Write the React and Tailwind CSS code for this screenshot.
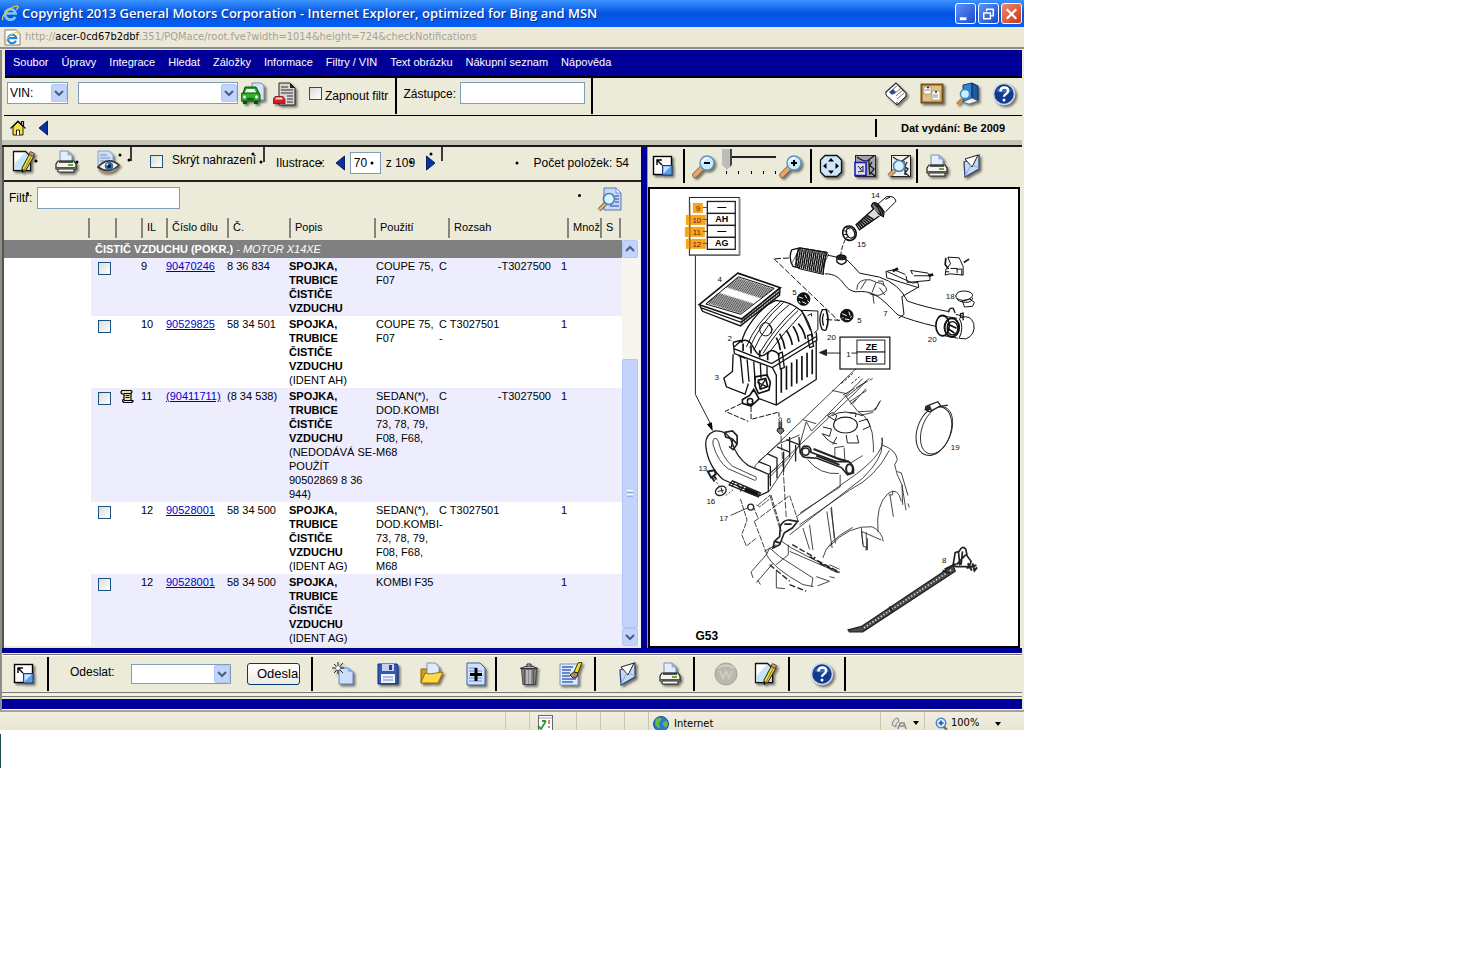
import React from "react";

const sans = "font-['Liberation_Sans',Arial,sans-serif]";
const tahoma = "font-['DejaVu_Sans_Condensed','DejaVu_Sans',sans-serif]";
const shadow = "drop-shadow-[2px_2px_1px_rgba(0,0,0,0.5)]";

/* ---------- icons ---------- */

function Icon({ children, flat }) {
  return (
    <svg viewBox="0 0 24 24" className={flat ? "block size-6" : "block size-6 " + shadow} aria-hidden="true">
      {children}
    </svg>
  );
}

function IconButton({ label, children, flat }) {
  return (
    <button type="button" aria-label={label} className="size-6 shrink-0">
      <Icon flat={flat}>{children}</Icon>
    </button>
  );
}

const NotePencil = (
  <>
    <path d="M1.5 1.5h12l5 5v14h-17z" fill="#fff" stroke="#111" strokeWidth="1.3" />
    <path d="M2.500 14L13 2.500l5 4V20H2.500z" fill="#b9dcf8" opacity=".8" />
    <path d="M17.500 4l4.500 2-8 14-4 2.500v-4.500z" fill="#e8d838" stroke="#222" />
    <path d="M20 5L12 20" stroke="#8f8212" />
    <path d="M18.500 1.500l4 2-1 3-4.500-2z" fill="#d98a86" stroke="#222" strokeWidth=".7" />
    <path d="M10 19l2 1-2 3z" fill="#111" />
  </>
);
const Printer = (
  <>
    <path d="M6 11V1h8l4 4v6z" fill="#e4edfb" stroke="#7d93bd" />
    <path d="M14 1v4h4z" fill="#a9bfe6" stroke="#7d93bd" strokeWidth=".7" />
    <path d="M4 11h16l2 3v5H2v-5z" fill="#f4f4ec" stroke="#222" strokeWidth="1.2" />
    <path d="M5 12h14" stroke="#222" strokeWidth="1.500" />
    <path d="M2 17.500h20" stroke="#555" />
    <path d="M14 15h5" stroke="#58b431" strokeWidth="2" />
    <path d="M4 19h16v3H4z" fill="#fbfbf5" stroke="#222" />
  </>
);
const Eye = (
  <>
    <path d="M2 1h11l4 4v14H2z" fill="#cfdff8" stroke="#8aa2d0" />
    <path d="M4 5h7M4 8h10M4 11h10" stroke="#6c8dce" />
    <path d="M2 17Q12 6 23 15Q13 25 2 17z" fill="#f3f3f3" stroke="#3d3328" strokeWidth="1.6" />
    <path d="M3 20q9 5 17-1" fill="none" stroke="#b98d6c" strokeWidth="1.500" />
    <circle cx="13" cy="16" r="4.3" fill="#2b6fb4" />
    <circle cx="13" cy="16" r="2" fill="#071a33" />
    <circle cx="11.5" cy="14.5" r="1" fill="#fff" />
  </>
);
const DocSearch = (
  <>
    <path d="M6 1h12l5 5v17H6z" fill="#c6d8f7" stroke="#5875b4" />
    <path d="M18 1v5h5z" fill="#f2f6ff" stroke="#5875b4" strokeWidth=".7" />
    <path d="M17 9h4M17 12h4M17 15h4M12 19h9" stroke="#5577c0" strokeWidth="1.4" />
    <path d="M8 16l-7 7" stroke="#7b5b32" strokeWidth="4" />
    <path d="M8 16l-7 7" stroke="#e3b47e" strokeWidth="2.4" />
    <circle cx="11" cy="12" r="5.500" fill="#d8f4ff" stroke="#4c7fb5" strokeWidth="1.6" />
  </>
);
const Expand = (
  <>
    <rect x="2.5" y="2.5" width="18" height="18" fill="#fff" stroke="#000" strokeWidth="1.4" />
    <path d="M6 11V6h5M6 6l5 5" fill="none" stroke="#000" strokeWidth="1.4" />
    <rect x="11.500" y="11.500" width="9.500" height="9.500" fill="#5f9fe8" stroke="#1d3d7c" />
    <path d="M12.500 12.500h7l-7 7z" fill="#c8e2ff" />
  </>
);
const lens = (
  <>
    <path d="M10 14l-7 7" stroke="#8d5f36" strokeWidth="5.500" strokeLinecap="round" />
    <path d="M10 14l-7 7" stroke="#dfa873" strokeWidth="4" strokeLinecap="round" />
    <circle cx="15" cy="9" r="7" fill="#c8ecff" stroke="#5d93c4" strokeWidth="1.4" />
    <path d="M10 8q2-4 6-4" fill="none" stroke="#fff" strokeWidth="1.5" />
  </>
);
const ZoomOut = <>{lens}<path d="M12 9h6" stroke="#000" strokeWidth="2" /></>;
const ZoomIn = <>{lens}<path d="M12 9h6M15 6v6" stroke="#000" strokeWidth="2" /></>;
const Pan = (
  <>
    <path d="M6 1.500h12l4.500 4.500v12L18 22.500H6L1.500 18V6z" fill="#cfe6fb" stroke="#111" strokeWidth="1.3" />
    <path d="M12 4l3 3.500H9zM12 20l3-3.500H9zM4 12l3.500-3v6zM20 12l-3.500-3v6z" fill="#000" />
  </>
);
const FitArea = (
  <>
    <rect x="2.500" y="1.500" width="20" height="21" fill="#a3a3ad" stroke="#222" />
    <path d="M4 3q5 4 10 4l7-5M16 6v5l5 4-3 4 4 3M19 8l-3 5 1 8" fill="none" stroke="#111" strokeWidth="1.2" />
    <rect x="2" y="8.500" width="11" height="13" fill="#d8dcf4" stroke="#1414b8" strokeWidth="1.5" />
    <path d="M5 12l5 6V12l-3 3M5 18l4-1" fill="none" stroke="#222" />
  </>
);
const ZoomArea = (
  <>
    <rect x="4.500" y="1.500" width="19" height="21" fill="#f0f0f0" stroke="#222" />
    <path d="M6 3q5 4 9 4l7-5M17 7v5l4 3-3 4 4 3M20 8l-2 4M18 14v7" fill="none" stroke="#222" strokeWidth="1.3" />
    <path d="M8 16l-6 6" stroke="#6e4c26" strokeWidth="4.500" />
    <path d="M8 16l-6 6" stroke="#dfa873" strokeWidth="3" />
    <circle cx="12" cy="12" r="5.500" fill="#d6f0ff" stroke="#4a7fb0" strokeWidth="1.500" />
  </>
);
const Envelope = (
  <>
    <path d="M4 8L19 1v14L5 23z" fill="#c4d9f6" stroke="#33456f" strokeWidth="1.300" />
    <path d="M5 5L18 1l-6 12z" fill="#fff" stroke="#222" />
    <path d="M5 22l6-11M19 14l-6-3" fill="none" stroke="#8ba5d4" />
  </>
);
const NewDoc = (
  <>
    <path d="M7 6h9l5 4v12H7z" fill="#c9defa" stroke="#6684bf" />
    <path d="M16 6v4h5z" fill="#8fb0e6" />
    <path d="M6 0v12M0 6h12M2 2l9 9M11 1L2 11" stroke="#222" />
    <circle cx="6" cy="6" r="2" fill="#fff" />
  </>
);
const Floppy = (
  <>
    <path d="M2 2h19l1 2v18H2z" fill="#3358bd" stroke="#142a70" />
    <rect x="6" y="2" width="12" height="7" fill="#c5d2f3" />
    <rect x="13" y="3" width="3" height="5" fill="#24408f" />
    <rect x="5" y="12" width="14" height="9" fill="#eef2fb" />
    <path d="M7 15h10M7 18h10" stroke="#6d88cc" />
  </>
);
const Folder = (
  <>
    <path d="M1 7h6l1 2v12H1z" fill="#d59d17" stroke="#8a6209" />
    <path d="M7 1h8l4 4v10H7z" fill="#dfeafb" stroke="#7d93bd" />
    <path d="M5 11l5 1 13-2-5 11H1z" fill="#ffd94a" stroke="#9b6c05" />
  </>
);
const DocPlus = (
  <>
    <path d="M3 1h13l5 5v17H3z" fill="#cfe0fa" stroke="#3e5ea6" />
    <path d="M5 6h8M5 9h13M5 16h13M5 19h13" stroke="#6f8fd0" />
    <path d="M12 6v13M6 12.500h12" stroke="#000" strokeWidth="3" />
  </>
);
const Trash = (
  <>
    <path d="M4.500 7h15l-1 15.500H6z" fill="#8d8d8d" stroke="#444" />
    <path d="M7.500 8v14M16.500 8v14" stroke="#555" strokeWidth="1.500" />
    <path d="M10 8v14M13 8v14" stroke="#c4c4c4" strokeWidth="1.500" />
    <path d="M3 6.500q9-5 18 0z" fill="#b5b5b5" stroke="#333" />
    <path d="M10 4V2h4v2" fill="none" stroke="#222" />
  </>
);
const DocBrush = (
  <>
    <path d="M1 2h18v21H1z" fill="#dfeafc" stroke="#7f97cb" />
    <path d="M3 5h11M3 8h9M3 11h8M3 14h8M3 17h14M3 20h11" stroke="#3f66b5" strokeWidth="1.300" />
    <path d="M15 10L19 1l4-1-4 11z" fill="#f0dc28" stroke="#3c3610" />
    <path d="M11 13l4-3 4 1-1 4-4 1z" fill="#b28a6a" stroke="#33261a" />
  </>
);
const Globe = (
  <>
    <circle cx="12" cy="12" r="11" fill="#b9b9b0" stroke="#a2a298" />
    <path d="M6 9l3 7 3-7 3 7 3-7" fill="none" stroke="#d0d0c6" strokeWidth="1.600" />
    <path d="M4 6q8-5 16 0" fill="none" stroke="#cfcfc6" strokeWidth="2" />
  </>
);
const Help = (
  <>
    <circle cx="12" cy="12" r="10.500" fill="#103a8e" stroke="#c9d5ea" strokeWidth="1.600" />
    <path d="M4 9q8-9 16 0-8 3-16 0z" fill="#5b8bd8" opacity=".6" />
    <path d="M8.500 9.500q0-4 4-4t3.500 3.500q0 2-2 3t-2 2.800" fill="none" stroke="#fff" strokeWidth="2.500" />
    <circle cx="12" cy="18" r="1.500" fill="#fff" />
  </>
);
const Car = (
  <>
    <path d="M11 1h9l3 3v14H11z" fill="#d5e3f7" stroke="#7c8fae" />
    <path d="M4 5h11l3 6v3H2v-3z" fill="#2a9a2a" stroke="#0c4d0c" />
    <path d="M5.500 7h8l2 4h-12z" fill="#e8ffe8" />
    <path d="M1 11h17l1 2v6H0v-6z" fill="#36ad30" stroke="#0c4d0c" />
    <path d="M2 19v3h4v-3zM13 19v3h4v-3z" fill="#134d13" />
    <circle cx="3.500" cy="15" r="1.400" fill="#fff" />
    <circle cx="15.500" cy="15" r="1.400" fill="#fff" />
    <path d="M6 17h7" stroke="#0c4d0c" strokeWidth="1.500" />
  </>
);
const CarDoc = (
  <>
    <path d="M6 1h11l5 5v17H6z" fill="#d4d4d4" stroke="#222" />
    <path d="M17 1v5h5z" fill="#222" />
    <path d="M8 5h7M8 8h12M8 11h12M14 14h6M14 17h6M14 20h6" stroke="#333" />
    <path d="M2 14.500h8l2 3v4H0v-4z" fill="#d41c24" stroke="#7d090d" strokeWidth=".7" />
    <path d="M3 15.500h6l1 2H2z" fill="#ffd7d7" />
  </>
);
const News = (
  <>
    <path d="M2 10L12 1l10 10-9 9z" fill="#fff" stroke="#222" strokeWidth="1.100" />
    <path d="M2 10v3l11 10 9-9v-3M13 20v3" fill="#fff" stroke="#222" />
    <path d="M8 8l5-4M10 12l7-6M12 14l7-6M13 17l7-6" stroke="#777" />
    <path d="M5 10l4-3 3 3-4 3z" fill="#24508f" />
  </>
);
const Board = (
  <>
    <rect x="1.500" y="2.500" width="21" height="18" fill="#dfc08a" stroke="#7a5319" strokeWidth="2" />
    <path d="M4 5h7v7H4z" fill="#fff" stroke="#8a7a5a" strokeWidth=".6" />
    <path d="M12 9h8v9h-8z" fill="#fff" stroke="#8a7a5a" strokeWidth=".6" />
    <path d="M5 8h5M13 13h5M13 15h5" stroke="#666" strokeWidth=".8" />
    <circle cx="8" cy="5.500" r="1" fill="#222" />
    <circle cx="16" cy="10" r="1" fill="#222" />
  </>
);
const BookSearch = (
  <>
    <path d="M7 3l9-2v15l-9 4z" fill="#2c86d3" stroke="#0f3f78" />
    <path d="M16 1l6 3v15l-6-3z" fill="#1a5ba4" stroke="#0c2f5e" />
    <path d="M7 20l9-4 6 3-9 3z" fill="#f1f1f1" stroke="#456" strokeWidth=".6" />
    <path d="M6 17l-5 5" stroke="#d0813c" strokeWidth="3" />
    <circle cx="9" cy="12" r="4.600" fill="#cdefff" stroke="#4287bf" strokeWidth="1.500" />
  </>
);

function ExplorerLogo({ page }) {
  return (
    <svg viewBox="0 0 18 18" className="size-[17px] shrink-0" aria-hidden="true">
      {page && <path d="M1 1h12l4 4v12H1z" fill="#fff" stroke="#777" />}
      <g transform={page ? "translate(1.500 2.500) scale(.8)" : ""}>
        <path d="M14 12.500A5.600 5.600 0 1 1 14.500 9H5" fill="none" stroke={page ? "#2a86d8" : "#7cc9ff"} strokeWidth="2.800" />
        <path d="M1 16Q-1 12 6 6T17 1.500Q17 4 15 5" fill="none" stroke="#f0c53a" strokeWidth="1.400" />
      </g>
    </svg>
  );
}

function Triangle({ dir }) {
  return (
    <svg viewBox="0 0 10 16" className="block h-4 w-[10px]" aria-hidden="true">
      <path d={dir === "left" ? "M9.500 1v14L1 8z" : "M.5 1v14L9 8z"} fill="#0c2f9c" stroke="#071f66" />
    </svg>
  );
}

function Chevron({ up }) {
  return (
    <svg viewBox="0 0 16 18" className="block h-[18px] w-4" aria-hidden="true">
      <rect x=".5" y=".5" width="15" height="17" rx="1.500" fill="#c2d4fc" stroke="#b0c6f4" />
      <path d={up ? "M4 11l4-4 4 4" : "M4 7l4 4 4-4"} fill="none" stroke="#4d6185" strokeWidth="2.200" />
    </svg>
  );
}

/* ---------- controls ---------- */

function Dropdown({ label, id, value, className }) {
  return (
    <div className={"relative shrink-0 " + className}>
      <select
        id={id}
        aria-label={label}
        className="block h-full w-full appearance-none border border-[#7f9db9] bg-white pl-[2px] text-[12px] text-black"
      >
        <option>{value}</option>
      </select>
      <span className="pointer-events-none absolute inset-y-0 right-px flex items-center">
        <Chevron />
      </span>
    </div>
  );
}

function Check({ id, label }) {
  return (
    <input
      id={id}
      type="checkbox"
      aria-label={label}
      className="block size-[13px] shrink-0 appearance-none border border-[#1c5180] bg-linear-to-br from-[#dcdcd7] to-white"
    />
  );
}

const textBox = "h-[22px] shrink-0 border border-[#7f9db9] bg-white px-[3px] text-[12px]";

/* ---------- part list ---------- */

const parts = [
  { il: "9", no: "90470246", cat: "8 36 834", note: [], use: ["COUPE 75,", "F07"], c: "C", to: "-T3027500" },
  { il: "10", no: "90529825", cat: "58 34 501", note: ["(IDENT AH)"], use: ["COUPE 75,", "F07"], c: "C T3027501", dash: true },
  {
    il: "11", no: "(90411711)", cat: "(8 34 538)", scroll: true,
    note: ["(NEDODÁVÁ SE-", "POUŽÍT", "90502869 8 36", "944)"],
    use: ["SEDAN(*),", "DOD.KOMBI", "73, 78, 79,", "F08, F68,", "M68"], c: "C", to: "-T3027500",
  },
  { il: "12", no: "90528001", cat: "58 34 500", note: ["(IDENT AG)"], use: ["SEDAN(*),", "DOD.KOMBI", "73, 78, 79,", "F08, F68,", "M68"], c: "C T3027501", dash: true },
  { il: "12", no: "90528001", cat: "58 34 500", note: ["(IDENT AG)"], use: ["KOMBI F35"] },
];

function Lines({ items }) {
  return items.map((t) => <div key={t}>{t}</div>);
}

function ScrollNote() {
  return (
    <svg viewBox="0 0 14 15" className="block h-[15px] w-[14px]" aria-hidden="true">
      <path d="M2 1.500h9q2 1 0 3v7h2q0 2-2 2H4q-2-1-1-3h1V5H2Q0 3 2 1.500z" fill="#efe3b4" stroke="#000" strokeWidth="1.200" />
      <path d="M4 4.500h7M5.500 6.500h4M5.500 8.500h4M4 11.500h7" stroke="#000" />
    </svg>
  );
}

function Th({ children, className }) {
  return (
    <th className="p-0 text-left align-top font-normal">
      <div className={"mt-px h-[20px] border-l-2 border-[#85857d] pl-1 leading-[18px] whitespace-nowrap " + className}>{children}</div>
    </th>
  );
}

function PartTable() {
  return (
    <table className="w-full table-fixed border-collapse text-[11px] leading-[14px]">
      <colgroup>
        <col className="w-[87px]" />
        <col className="w-[24px]" />
        <col className="w-[26px]" />
        <col className="w-[25px]" />
        <col className="w-[61px]" />
        <col className="w-[62px]" />
        <col />
        <col className="w-[63px]" />
        <col className="w-[122px]" />
        <col className="w-[39px]" />
        <col className="w-[22px]" />
      </colgroup>
      <thead>
        <tr className="h-[23px] bg-[#ecebd9]">
          <td className="p-0" />
          <Th className="-ml-[3px]" />
          <Th />
          <Th>IL</Th>
          <Th>Číslo dílu</Th>
          <Th>Č.</Th>
          <Th>Popis</Th>
          <Th className="-ml-[2px]">Použití</Th>
          <Th className="ml-[9px]">Rozsah</Th>
          <Th className="ml-[6px]">Množ</Th>
          <Th className="mr-px border-r-2">S</Th>
        </tr>
      </thead>
      <tbody>
        <tr className="h-[18px] bg-[#808080] text-white">
          <td colSpan={11} className="py-0 pr-0 pl-[91px]">
            <b>ČISTIČ VZDUCHU (POKR.)</b> - <i>MOTOR X14XE</i>
          </td>
        </tr>
        {parts.map((p, i) => {
          const tint = i % 2 === 0 ? "bg-[#eeedfd]" : "bg-white";
          const td = tint + " px-0 py-px align-top whitespace-nowrap";
          return (
            <tr key={i}>
              <td className="bg-white p-0" />
              <td className={td + " pl-[7px]"}>
                <div className="pt-[3px]"><Check label={"Položka " + p.il} /></div>
              </td>
              <td className={td + " pl-[5px]"}>{p.scroll && <ScrollNote />}</td>
              <td className={td}>{p.il}</td>
              <td className={td}><a href="#dil" className="text-[#0000c8] underline">{p.no}</a></td>
              <td className={td}>{p.cat}</td>
              <td className={td}>
                <div className="font-bold"><Lines items={["SPOJKA,", "TRUBICE", "ČISTIČE", "VZDUCHU"]} /></div>
                <Lines items={p.note} />
              </td>
              <td className={td}><Lines items={p.use} /></td>
              <td className={td}>
                <div className="flex justify-between pr-[10px]"><span>{p.c}</span><span>{p.to}</span></div>
                {p.dash && <div>-</div>}
              </td>
              <td className={td}>1</td>
              <td className={td} />
            </tr>
          );
        })}
      </tbody>
    </table>
  );
}

function ScrollBar() {
  return (
    <div className="mt-[23px] flex w-[19px] shrink-0 flex-col bg-[#f6f5f0] pr-[3px]">
      <button type="button" aria-label="Nahoru"><Chevron up /></button>
      <div className="grow-[103]" />
      <div className="flex grow-[267] flex-col items-center justify-center gap-px rounded-xs border border-[#b0c6f4] bg-[#c2d4fc]">
        <span className="h-px w-[6px] bg-white" />
        <span className="h-px w-[6px] bg-[#8cb0f8]" />
        <span className="h-px w-[6px] bg-white" />
        <span className="h-px w-[6px] bg-[#8cb0f8]" />
      </div>
      <button type="button" aria-label="Dolů"><Chevron /></button>
    </div>
  );
}

/* ---------- exploded view ---------- */

const lerp = (a, b, t) => [a[0] + (b[0] - a[0]) * t, a[1] + (b[1] - a[1]) * t];

function hatch(a, b, c, d, n, from = 0, to = 1) {
  let out = "";
  for (let i = 0; i <= n; i++) {
    const p = lerp(a, b, i / n);
    const q = lerp(c, d, i / n);
    const s = lerp(p, q, from);
    const e = lerp(p, q, to);
    out += `M${s[0]} ${s[1]}L${e[0]} ${e[1]}`;
  }
  return out;
}

const labels = [
  ["14", 876, 199], ["15", 862, 248], ["4", 720, 283], ["5", 795, 296], ["5", 860, 324], ["7", 886, 317],
  ["18", 951, 300], ["20", 933, 343], ["20", 832, 341], ["2", 730, 342], ["3", 717, 382], ["1", 849, 358],
  ["6", 789, 425], ["13", 703, 473], ["16", 711, 506], ["17", 724, 523], ["19", 956, 452], ["8", 945, 565],
];

function LegendBox() {
  const rows = [["9", "—", 698, 693, 10], ["10", "AH", 697, 686, 20], ["11", "—", 697, 685, 20], ["12", "AG", 697, 686, 20]];
  return (
    <g>
      <rect x="689.5" y="198.5" width="50" height="58" fill="#fff" stroke="#222" />
      <path d="M740 199v57h-50" fill="none" stroke="#888" strokeWidth="1.500" />
      {rows.map(([n, code, nx, x, w], i) => (
        <g key={n}>
          <rect x={x} y={204 + i * 12} width={w} height="10" fill="#f9a51a" />
          <path d={`M703 ${208.5 + i * 12}h5`} stroke="#555" />
          <text x={nx} y={212 + i * 12} fontSize="8" fill="#6a2020" textAnchor="middle">{n}</text>
          <rect x="707.5" y={202.5 + i * 12} width="28" height="12" fill="#fff" stroke="#222" strokeWidth="1.300" />
          <text x="722" y={211.500 + i * 12} fontSize="9" fontWeight="bold" textAnchor="middle">{code}</text>
        </g>
      ))}
      <path d="M690 204v48" stroke="#7a5a20" strokeWidth="1" />
      <path d="M695.5 257V396L712 428" fill="none" stroke="#222" />
      <path d="M713 433l-6-7 5-2z" />
    </g>
  );
}

function Diagram() {
  return (
    <svg
      viewBox="650 190 369 455"
      className="block h-auto w-full font-['Liberation_Sans',Arial,sans-serif]"
      role="img"
      aria-label="G53"
    >
      <LegendBox />

      {/* air filter and housing */}
      <g transform="translate(680 185) scale(.33333)" fill="none" stroke="#111" strokeWidth="3">
        <path d="M174 268L302 312L186 406L58 363Z" strokeWidth="5" />
        <path d="M176 279L284 314L183 392L78 361Z" />
        <path d={hatch([80, 358], [180, 389], [176, 282], [280, 315], 26, 0, 0.4)} strokeWidth="2.200" />
        <path d={hatch([80, 358], [180, 389], [176, 282], [280, 315], 26, 0.62, 1)} strokeWidth="2.200" />
        <path d="M60 366L68 383L182 427L300 334L301 314M62 372L184 416L300 324" strokeWidth="4" />
        <path d={hatch([184, 410], [298, 320], [184, 426], [298, 334], 22)} strokeWidth="2" />
        <path d="M186 478C190 440 240 370 288 350Q330 352 366 382Q392 420 400 462" strokeWidth="4" />
        <path d="M200 490Q226 420 305 352M222 500Q256 420 330 362M240 508Q286 430 350 372M262 515Q310 450 366 390M210 492Q240 420 312 356M250 510Q294 436 356 380" />
        <path d="M300 450Q312 470 316 496M320 440Q334 460 338 484M340 428Q354 448 358 474M356 420Q374 440 378 466M290 462Q300 480 302 500" strokeWidth="5" />
        <ellipse cx="258" cy="437" rx="18" ry="20" />
        <path d="M268 424l10 12-4 14" />
        <path d="M366 380L415 382L415 438L404 448M366 380L392 440M384 396l12-6v8" />
        <path d="M160 476L186 470M160 476L164 510L278 552L412 470L410 446M164 496L276 540L412 458M164 490Q200 450 220 490T260 510T300 516" strokeWidth="4" />
        <path d="M176 516l22 8M190 480v22M214 488v22M240 500v22M264 508v22" strokeWidth="5" />
        <path d="M160 512L158 564L132 584L140 610L196 632L206 600M278 552L290 575V664M410 470L410 588L290 665L240 646" strokeWidth="4" />
        <path d={hatch([305, 556], [398, 498], [305, 628], [398, 572], 6)} strokeWidth="5" />
        <path d={hatch([182, 520], [262, 548], [190, 600], [262, 580], 4)} strokeWidth="4" />
        <path d="M226 580L262 574L272 596L268 620L236 630L226 608ZM236 590l22-5 6 24-22 8z" strokeWidth="5" />
        <path d="M232 596l30 14M240 616l18-30" strokeWidth="4" />
        <path d="M188 648L210 636L222 618L238 646L214 668L188 660ZM204 654a8 6 0 1 0 14 0a8 6 0 1 0-14 0" strokeWidth="5" />
        <path d="M296 510l12-4 6 46-12 4zM384 456l12-4 6 36-12 4z" strokeWidth="4" />
        <path d="M186 660L136 684L206 714M214 670V708L298 686V700" strokeDasharray="16 5" />
        <path d="M282 224L478 412M286 225L334 222M440 408L482 410" strokeDasharray="18 6" />
        <g fill="#111">
          <circle cx="372" cy="346" r="19" />
          <circle cx="502" cy="396" r="19" />
        </g>
        <path d="M358 340l12 4M376 334l6 10M368 354l12 6M384 350l4 6M358 352l4 6M488 390l14 6M508 384l4 12M496 406l14 2M512 402l5-4M492 400l-4 4" stroke="#fff" />
        <path d="M428 378q-14 30 0 60q10 4 12 0q12-30 0-60zM440 380q10 30 0 56M432 390q-6 18 0 36" strokeWidth="4" />
      </g>

      {/* variant code box */}
      <g fill="#fff" stroke="#222">
        <rect x="840.500" y="338.500" width="50" height="32" strokeWidth="1.300" />
        <rect x="857.500" y="341.500" width="28" height="12" />
        <rect x="857.500" y="353.500" width="28" height="12" />
        <path d="M824 354.500h17M852 354.500h6" />
        <path d="M820 354l7-3v6z" fill="#222" />
      </g>
      <text x="872" y="351" fontSize="9" fontWeight="bold" textAnchor="middle">ZE</text>
      <text x="872" y="363" fontSize="9" fontWeight="bold" textAnchor="middle">EB</text>

      {/* intake hose, sensor, brackets */}
      <g transform="translate(780 185) scale(.33333)" fill="none" stroke="#111" strokeWidth="3">
        <path d="M296 60L322 38Q346 34 350 52L318 84M318 46l14-6" />
        <path d="M280 58Q292 50 314 84L312 98Q290 90 276 66Z" fill="#777" strokeWidth="4" />
        <path d="M284 60Q300 70 306 96M292 60Q306 72 312 92" strokeWidth="4" />
        <path d="M284 74L230 122L240 138L300 96" fill="#ddd" strokeWidth="4" />
        <path d={hatch([234, 118], [262, 94], [246, 134], [284, 108], 6)} strokeWidth="5" />
        <ellipse cx="210" cy="148" rx="20" ry="22" transform="rotate(-25 210 148)" strokeWidth="5" />
        <ellipse cx="213" cy="147" rx="12" ry="16" transform="rotate(-25 213 147)" strokeWidth="4" />
        <path d="M200 130l10 6M194 140l10 4M194 152l10 0M200 162l8-4" />
        <path d="M198 166Q186 190 184 214" strokeDasharray="14 6" />
        <path d="M36 198Q26 226 40 248L60 252M36 198L60 192L142 206" strokeWidth="4" />
        <path d="M60 192Q40 224 56 254L132 272Q128 236 144 206Z" strokeWidth="3" />
        <path d={hatch([56, 194], [140, 208], [48, 250], [130, 270], 14)} strokeWidth="4" />
        <path d={hatch([60, 194], [148, 210], [36, 240], [120, 268], 9)} strokeWidth="2" />
        <path d="M144 214L172 220M200 226Q226 250 240 268L300 280Q360 300 384 352Q440 372 510 384M530 392L552 398M136 270C200 270 186 326 236 324C290 318 320 360 356 394Q400 412 468 428" />
        <path d="M172 220q8-12 26-2l2 16q-14 16-28 0z" strokeWidth="4" />
        <ellipse cx="186" cy="221" rx="14" ry="7" fill="#222" />
        <path d="M232 318q0-34 40-30l20 8q28 4 30 24q-20 24-52 10M244 316l16-26M280 330l4 30M290 296l-12 30M296 292l14 0 4 14M300 312l16 22" strokeWidth="2.500" />
        <path d="M368 340l6 52-16 12M366 340L414 312" />
        <path d="M320 262L400 298L416 296L418 312L322 282ZM324 262l20-4 34 14M400 272L394 260L446 268L450 276L404 276M380 276l4 20L452 290V270" />
        <path d="M340 262l16-8M448 276l14-4" strokeWidth="8" />
        <path d="M506 220L540 222L552 248V274L512 270L498 274L500 258L514 240ZM514 254h20v14M532 256h16v18M498 264h12" />
        <path d="M500 222l-2 20 10 14M554 236l16-10" strokeWidth="5" />
        <path d="M530 336q4-16 30-14q22 4 20 14q-6 14-30 14q-22-4-20-14M532 344q4 10 28 12q20 0 20-14M550 352l22-6 14 10-6 12-24 2z" strokeWidth="3" />
        <ellipse cx="490" cy="426" rx="20" ry="31" strokeWidth="5" />
        <path d="M486 396L534 404M494 456L536 464" />
        <ellipse cx="518" cy="432" rx="22" ry="28" strokeWidth="6" />
        <ellipse cx="520" cy="434" rx="16" ry="20" strokeWidth="4" />
        <path d="M504 420l28 14M504 434l22 14" strokeWidth="5" />
        <path d="M540 404Q556 430 540 464M546 402Q574 392 584 420Q590 454 560 466L540 464" />
        <path d="M508 386q2-16 14-12l6 14M544 404v-14l8-2v22" strokeWidth="4" />
        <path d="M186 600l34-30M216 600l24-20" strokeDasharray="8 5" />
      </g>

      {/* duct, screws and bulkhead */}
      <g transform="translate(690 380) scale(.33333)" fill="none" stroke="#222" strokeWidth="2.500">
        <path d="M196 262L500 -30M236 290L500 40L530 8M268 196L330 170M330 200L350 130L366 158L520 0M428 36l44 10M340 124l40 12M330 200L238 340M236 300L300 236" />
        <path d="M206 250l36 14M232 226l32 14M262 206l40 16M290 184l40 16M300 176v60M318 200v50M262 240v60M242 264v60M282 220v60M328 176l4 50" strokeWidth="4" />
        <path d="M196 262v22M236 290l30-26M206 250L268 196M466 50L506 100L548 98L560 88M470 56L540 0M490 76L530 30M556 96L574 66M506 100Q550 120 552 200V222" />
        <path d="M74 158Q44 170 48 204Q54 262 100 304L210 352L236 340V288L176 262Q140 238 126 190Q112 154 74 158Z" fill="#fff" strokeWidth="4" />
        <path d="M74 180Q66 186 70 200Q84 250 116 272L194 306Q204 306 198 296L128 264Q96 236 86 190Q82 178 74 180Z" />
        <path d="M104 162L128 158L142 172V198L130 214L118 204M104 162L108 176L128 182L142 198M128 182L126 206" strokeWidth="5" />
        <path d="M118 320L206 356L212 344L128 308ZM134 312l-8 14M160 324l-8 16" strokeWidth="4" />
        <path d="M168 328L206 342L204 354L164 340Z" fill="#111" />
        <path d="M142 318l8 10 12 0" strokeWidth="6" />
        <path d="M54 280l20-4 4 12-14 10zM66 296l8 14M70 290l10 14" strokeWidth="6" />
        <ellipse cx="93" cy="338" rx="17" ry="13" transform="rotate(-30 93 338)" strokeWidth="4" />
        <path d="M84 340l18-4M94 328l4 16" strokeWidth="3" />
        <path d="M108 352l26-20M80 312l10 14" strokeDasharray="6 5" />
        <ellipse cx="272" cy="124" rx="4" ry="6" />
        <path d="M268 130v18h8v-18M264 150h16l3 8-10 10-11-10z" strokeWidth="3" fill="#777" />
        <path d="M274 172L290 420" strokeDasharray="20 5" />
        <ellipse cx="468" cy="140" rx="36" ry="24" strokeWidth="3.500" />
        <path d="M428 112Q460 90 520 112M414 112l14-10 14 10-6 14zM400 146l26 6-6 22-22-8M442 176l-12 22M470 170l4 24h34l-6-24M508 130l26-8 8 22-22 10M480 104l20 0-2 12M398 166Q420 196 442 196" strokeWidth="3" />
        <path d="M342 204Q366 200 364 222L440 250L478 250Q496 262 492 284L474 290L456 268L382 240L358 238Q334 240 332 218Z" strokeWidth="5" />
        <path d="M372 212L442 240L478 250M380 232L450 260" strokeWidth="6" />
        <circle cx="348" cy="220" r="11" strokeWidth="5" />
        <ellipse cx="480" cy="272" rx="10" ry="14" strokeWidth="6" />
        <path d="M354 244Q390 290 448 286M436 208v30l20 8M464 208L466 246M436 208l28-4M480 256L520 232M452 290V326L332 404" />
        <path d="M578 178Q590 220 500 288L320 416M578 200Q580 240 520 300L300 470M600 216Q560 296 480 336L330 440M578 178v22" />
        <path d="M194 430L300 352L326 430M204 418L192 388M244 350L276 460M194 430L232 530M240 350L270 450" strokeDasharray="18 4" />
        <path d="M206 380L240 352M200 380l10 6 28-22M152 362L172 426L156 470L170 504L200 480" strokeDasharray="16 3" />
        <path d="M122 412L172 390" />
        <circle cx="183" cy="387" r="9" strokeWidth="4" />
        <path d="M272 444Q282 424 300 426L324 430L308 450L284 464L270 500L250 510L254 490L270 476ZM284 438h22M256 490l18 6" strokeWidth="5" />
        <path d="M190 600L184 582L230 530Q250 570 340 620L372 626M230 530L240 510L270 536L370 600M276 490L306 510L440 580M300 520L420 572M296 500V530L260 560M224 520L260 500M250 556L200 614M204 606l8 14M260 580v50l26 2M370 600l-4 26M400 540q10-50 90-92M340 450l20 64M360 440l10 76M412 400l16 110M424 390l14 106M380 596l40 14-36 14" />
        <path d="M240 560l60 50M300 620l50 20M360 536l90 46M308 500l70 40M390 556l60 28" strokeWidth="4" strokeDasharray="18 7" />
        <path d="M516 460l6 46h8v12M534 480v36" />
      </g>
      <g transform="translate(830 380) scale(.33333)" fill="none" stroke="#222" strokeWidth="2.500">
        <path d="M40 50L130 0M60 70L112 36M62 78L80 62M94 110Q130 104 136 98L152 68" strokeDasharray="40 6" />
        <path d="M158 200Q200 214 204 244L196 260L204 290L218 320L220 380M204 280L216 284L236 352M218 320L230 396M236 376l4 12" />
        <path d="M0 505Q60 440 128 446Q156 458 162 490M146 462Q138 380 176 346Q206 324 216 370M182 350L192 416M178 350h12v-12M6 386L14 480M96 450L100 500M110 462l2 54M96 460l60 26" />
        {/* hose clamp */}
        <ellipse cx="314" cy="158" rx="50" ry="76" transform="rotate(20 314 158)" strokeWidth="3" />
        <ellipse cx="322" cy="156" rx="44" ry="74" transform="rotate(20 322 156)" strokeWidth="2.500" />
        <path d="M290 84L326 70L334 82L300 100L288 94ZM300 80l6 16M332 84l24-4" strokeWidth="4" fill="#fff" />
        <circle cx="296" cy="90" r="6" fill="#222" />
        {/* cable tie */}
        <path d="M56 756L96 746L372 562L378 580L100 762L60 762Z" fill="#4a4a4a" strokeWidth="4" />
        <path d="M104 750L366 576" stroke="#ddd" strokeWidth="5" strokeDasharray="4 6" />
        <path d="M180 686l10 16M340 578l22 8M346 574l34-16" strokeWidth="6" />
        <path d="M372 560L378 524L390 520Q400 500 410 514L414 534L426 550L420 566L380 566ZM388 522l4 40M400 520l-4 40M410 530l-28 30" strokeWidth="5" />
        <path d="M416 556l12 22M412 570l30-8M430 556l6 22 8-10" strokeWidth="6" />
        <path d="M0 560L30 574M0 574L24 584M0 596L16 600" />
      </g>

      {labels.map(([t, x, y], i) => (
        <text key={i} x={x} y={y} fontSize="8" textAnchor="middle" fill="#111">{t}</text>
      ))}
      <text x="707" y="642" fontSize="12" fontWeight="bold" textAnchor="middle">G53</text>
    </svg>
  );
}

/* ---------- bars ---------- */

const winBtn = "flex size-[21px] items-center justify-center rounded-[3px] border border-white";

function TitleBar() {
  return (
    <header className="flex h-[27px] items-center gap-[3px] bg-linear-to-b from-[#3a93ff] via-[#0453e0] to-[#0560f5] pr-[2px] pl-[2px] text-white">
      <ExplorerLogo />
      <h1 className="grow truncate font-['Open_Sans','Noto_Sans',sans-serif] text-[13px] font-semibold [text-shadow:1px_1px_0_#0a2f8a]">
        Copyright 2013 General Motors Corporation - Internet Explorer, optimized for Bing and MSN
      </h1>
      <div className="flex gap-[2px]">
        <button type="button" aria-label="Minimalizovat" className={winBtn + " bg-linear-to-br from-[#5f93f5] to-[#1a48c8]"}>
          <svg viewBox="0 0 20 20" className="size-5"><path d="M4 15h7" stroke="#fff" strokeWidth="3" /></svg>
        </button>
        <button type="button" aria-label="Obnovit" className={winBtn + " bg-linear-to-br from-[#5f93f5] to-[#1a48c8]"}>
          <svg viewBox="0 0 20 20" className="size-5"><path d="M8 7V5h7v7h-3M5 9h7v6H5z" fill="none" stroke="#fff" strokeWidth="1.500" /></svg>
        </button>
        <button type="button" aria-label="Zavřít" className={winBtn + " bg-linear-to-br from-[#ee8a6c] to-[#c8330c]"}>
          <svg viewBox="0 0 20 20" className="size-5"><path d="M5 5l10 10M15 5L5 15" stroke="#fff" strokeWidth="2.300" /></svg>
        </button>
      </div>
    </header>
  );
}

const menu = ["Soubor", "Úpravy", "Integrace", "Hledat", "Záložky", "Informace", "Filtry / VIN", "Text obrázku", "Nákupní seznam", "Nápověda"];

function TopToolbar() {
  return (
    <div className="flex h-[38px] items-start border-b border-black text-[12px]">
      <div className="flex h-[36px] items-start border-r-2 border-black pt-1 pr-[7px] pl-[3px]">
        <Dropdown id="vin" label="VIN" value="VIN:" className="h-[22px] w-[61px]" />
        <Dropdown id="vinval" label="Číslo VIN" value="" className="ml-[10px] h-[22px] w-[160px]" />
        <div className="flex gap-2 pl-[3px]">
          <IconButton label="Vozidlo">{Car}</IconButton>
          <IconButton label="Údaje o vozidle">{CarDoc}</IconButton>
        </div>
        <div className="flex gap-[3px] pt-[5px] pl-[12px]">
          <Check id="zapnout" />
          <label htmlFor="zapnout" className="pt-[2px] leading-[14px]">Zapnout filtr</label>
        </div>
      </div>
      <div className="flex h-[36px] items-start border-r-2 border-black pt-1 pr-[6px] pl-[6px]">
        <label htmlFor="zastupce" className="w-[57px] leading-[24px]">Zástupce:</label>
        <input id="zastupce" className={textBox + " w-[125px]"} />
      </div>
      <div className="ml-auto flex gap-3 pt-1 pr-[6px]">
        <IconButton label="Zprávy">{News}</IconButton>
        <IconButton label="Nástěnka">{Board}</IconButton>
        <IconButton label="Hledání">{BookSearch}</IconButton>
        <IconButton label="Nápověda">{Help}</IconButton>
      </div>
    </div>
  );
}

function HomeRow() {
  return (
    <div className="flex h-6 items-center">
      <button type="button" aria-label="Domů" className="ml-[6px]">
        <svg viewBox="0 0 16 16" className="block size-4" aria-hidden="true">
          <path d="M3 7v8h10V7L8 2z" fill="#f6e13c" stroke="#222" />
          <path d="M.5 8.500L8 1l7.500 7.500M11.500 4V1.500h2V6" fill="none" stroke="#111" strokeWidth="1.200" />
          <path d="M6.500 15v-5h3v5" fill="#fff" stroke="#222" />
        </svg>
      </button>
      <button type="button" aria-label="Zpět" className="ml-3"><Triangle dir="left" /></button>
      <div className="ml-auto flex h-[18px] items-center border-l-2 border-black pr-[17px] pl-[24px] text-[11px] font-bold">
        Dat vydání: Be 2009
      </div>
    </div>
  );
}

const dots = [[36, 161], [77, 162], [120, 155], [129, 160], [253, 154], [261, 162], [321, 163], [372, 163], [411, 162], [431, 154], [517, 163]];

function ListToolbar() {
  return (
    <div className="relative flex h-[35px] items-start border-b-2 border-[#222] text-[12px]">
      <div className="flex gap-[18px] pt-[3px] pl-2">
        <IconButton label="Poznámka">{NotePencil}</IconButton>
        <IconButton label="Tisk">{Printer}</IconButton>
        <IconButton label="Zobrazení">{Eye}</IconButton>
      </div>
      <div className="flex gap-[9px] pt-[5px] pl-[30px]">
        <div className="pt-[3px]"><Check id="skryt" /></div>
        <label htmlFor="skryt" className="leading-[16px]">Skrýt nahrazení</label>
      </div>
      <div className="flex items-center pt-[5px] pl-[20px]">
        <label htmlFor="strana" className="leading-[22px]">Ilustrace:</label>
        <button type="button" aria-label="Předchozí" className="ml-[10px]"><Triangle dir="left" /></button>
        <input id="strana" defaultValue="70" className={textBox + " ml-[5px] w-[31px]"} />
        <span className="ml-[5px]">z 109</span>
        <button type="button" aria-label="Další" className="ml-[11px]"><Triangle dir="right" /></button>
      </div>
      <div className="ml-auto pt-[5px] pr-[12px] leading-[22px]">Počet položek: 54</div>
      <svg viewBox="4 147 636 33" className="pointer-events-none absolute top-0 left-0 h-[33px] w-[636px]" aria-hidden="true">
        {dots.map(([x, y]) => <circle key={x} cx={x} cy={y} r="1.500" />)}
        <path d="M131 147v14M264 147v15M442 147v14" stroke="#000" strokeWidth="1.500" />
      </svg>
    </div>
  );
}

function FilterRow() {
  return (
    <div className="flex h-[35px] items-start pt-[5px] pr-[19px] pl-[5px] text-[12px]">
      <label htmlFor="filtr" className="relative w-[28px] leading-[22px]">
        Filtr:
        <span className="absolute top-[5px] left-[17px] size-[3px] rounded-full bg-black" />
      </label>
      <input id="filtr" className={textBox + " w-[143px]"} />
      <span className="mt-[7px] mr-[17px] ml-auto size-[3px] rounded-full bg-black" />
      <IconButton label="Hledat v seznamu" flat>{DocSearch}</IconButton>
    </div>
  );
}

function ZoomSlider() {
  return (
    <div className="flex w-[54px] flex-col">
      <input
        type="range"
        aria-label="Zvětšení"
        min="0"
        max="4"
        defaultValue="0"
        className="h-[21px] w-full appearance-none bg-[linear-gradient(#222,#222)] bg-[length:100%_2px] bg-[position:0_7px] bg-no-repeat [&::-webkit-slider-thumb]:h-[21px] [&::-webkit-slider-thumb]:w-[10px] [&::-webkit-slider-thumb]:appearance-none [&::-webkit-slider-thumb]:border-r-2 [&::-webkit-slider-thumb]:border-[#444] [&::-webkit-slider-thumb]:bg-[#bdbdb7] [&::-webkit-slider-thumb]:[clip-path:polygon(0_0,100%_0,100%_75%,50%_100%,0_75%)]"
      />
      <div className="flex justify-between pt-px pl-1">
        {[0, 1, 2, 3, 4].map((n) => <span key={n} className="h-[3px] w-px bg-black" />)}
      </div>
    </div>
  );
}

const viewGroup = "flex h-[34px] items-center border-r-2 border-black";

function ViewToolbar() {
  return (
    <div className="flex h-[40px] items-start pt-[2px] pl-[3px]">
      <div className={viewGroup + " w-[34px]"}><IconButton label="Zvětšit panel">{Expand}</IconButton></div>
      <div className={viewGroup + " w-[127px] pl-[7px]"}>
        <IconButton label="Oddálit">{ZoomOut}</IconButton>
        <div className="mr-[3px] ml-[6px] self-start"><ZoomSlider /></div>
        <IconButton label="Přiblížit">{ZoomIn}</IconButton>
      </div>
      <div className={viewGroup + " w-[106px] gap-[10px] pl-[7px]"}>
        <IconButton label="Posun">{Pan}</IconButton>
        <IconButton label="Výřez">{FitArea}</IconButton>
        <IconButton label="Zvětšit výřez">{ZoomArea}</IconButton>
      </div>
      <div className="flex h-[34px] items-center gap-[11px] pl-[7px]">
        <IconButton label="Tisk obrázku">{Printer}</IconButton>
        <IconButton label="Odeslat obrázek">{Envelope}</IconButton>
      </div>
    </div>
  );
}

const actGroup = "flex h-[34px] shrink-0 items-center border-r-2 border-black";

function ActionBar() {
  return (
    <div className="border-t border-[#77776f] bg-white pt-px">
      <div className="flex h-[36px] items-center bg-[#ecebd9] text-[12px]">
        <div className={actGroup + " w-[46px] pl-[9px]"}><IconButton label="Zvětšit seznam">{Expand}</IconButton></div>
        <div className={actGroup + " w-[264px] pl-[21px]"}>
          <label htmlFor="odeslat" className="w-[61px] pb-1">Odeslat:</label>
          <Dropdown id="odeslat" label="Odeslat" value="" className="h-[20px] w-[100px]" />
          <button type="button" className="ml-4 h-[22px] w-[53px] overflow-hidden rounded-[3px] border border-[#003c74] bg-linear-to-b from-white to-[#ecebe6] pl-[9px] text-left text-[13px] leading-[20px]">
            Odesla
          </button>
        </div>
        <div className={actGroup + " w-[184px] gap-[20px] pl-[19px]"}>
          <IconButton label="Nový">{NewDoc}</IconButton>
          <IconButton label="Uložit">{Floppy}</IconButton>
          <IconButton label="Otevřít">{Folder}</IconButton>
          <IconButton label="Přidat">{DocPlus}</IconButton>
        </div>
        <div className={actGroup + " w-[99px] gap-[18px] pl-5"}>
          <IconButton label="Smazat">{Trash}</IconButton>
          <IconButton label="Upravit">{DocBrush}</IconButton>
        </div>
        <div className={actGroup + " w-[99px] gap-[18px] pl-5"}>
          <IconButton label="Odeslat seznam">{Envelope}</IconButton>
          <IconButton label="Tisk seznamu">{Printer}</IconButton>
        </div>
        <div className={actGroup + " w-[95px] gap-[16px] pl-[19px]"}>
          <IconButton label="Web" flat>{Globe}</IconButton>
          <IconButton label="Poznámky">{NotePencil}</IconButton>
        </div>
        <div className={actGroup + " w-[56px] pl-[20px]"}><IconButton label="Nápověda k seznamu">{Help}</IconButton></div>
      </div>
    </div>
  );
}

const cell = "h-[18px] border-l border-[#c9c6b4]";

function StatusBar() {
  return (
    <footer className={"flex h-5 items-start overflow-hidden border-t-2 border-[#a5a295] bg-linear-to-b from-[#f0eee0] to-[#e9e6d3] text-[11px] text-black " + tahoma}>
      <div className="grow" />
      <div className={cell + " w-[24px]"} />
      <div className={cell + " w-[47px] pt-[3px] pl-[6px]"}>
        <svg viewBox="0 0 17 15" className="block h-[15px] w-[17px]" aria-hidden="true">
          <rect x="2.500" y=".5" width="14" height="16" fill="#fff" stroke="#667" />
          <path d="M3 3h13" stroke="#99a" />
          <path d="M13 5v4M13 11v2" stroke="#c43" strokeWidth="1.300" />
          <path d="M2 11l3 3 5-8M6 6h4" fill="none" stroke="#2c9a3c" strokeWidth="1.800" />
        </svg>
      </div>
      <div className={cell + " w-[24px]"} />
      <div className={cell + " w-[24px]"} />
      <div className={cell + " w-[24px]"} />
      <div className={cell + " flex w-[232px] gap-[5px] pt-1 pl-[4px]"}>
        <svg viewBox="0 0 16 16" className="block size-4" aria-hidden="true">
          <circle cx="8" cy="8" r="7.500" fill="#2d77cf" stroke="#1b4c94" />
          <path d="M3 3q4-3 6 0l-3 4 1 5q-4 0-5-5zM10 6l4-1q2 4-1 7l-3-3z" fill="#62bb46" />
        </svg>
        <span className="leading-[16px]">Internet</span>
      </div>
      <div className={cell + " flex w-[44px] items-center gap-[6px] pt-1 pl-[10px]"}>
        <svg viewBox="0 0 16 14" className="block h-[14px] w-4" aria-hidden="true">
          <path d="M1 9q1-7 6-7l1 3-3 3v3z" fill="#ddd" stroke="#888" />
          <path d="M7 13l2-6 4 0 2 6M9 10h4" fill="none" stroke="#888" strokeWidth="1.500" />
        </svg>
        <svg viewBox="0 0 6 4" className="h-1 w-[6px]" aria-hidden="true"><path d="M0 0h6L3 4z" /></svg>
      </div>
      <div className={cell + " flex w-[100px] items-center pt-[5px] pl-[10px]"}>
        <svg viewBox="0 0 14 14" className="block size-[14px]" aria-hidden="true">
          <path d="M8 9l4 4" stroke="#a06a30" strokeWidth="2.500" />
          <circle cx="6" cy="6" r="4.800" fill="#d5ecff" stroke="#3b7dc2" strokeWidth="1.300" />
          <path d="M3.500 6h5M6 3.500v5" stroke="#1a4fa0" strokeWidth="1.500" />
        </svg>
        <span className="w-[46px] pl-[2px]">100%</span>
        <svg viewBox="0 0 6 4" className="h-1 w-[6px]" aria-hidden="true"><path d="M0 0h6L3 4z" /></svg>
      </div>
    </footer>
  );
}

export default function App() {
  return (
    <div className={"min-h-screen bg-white text-black " + sans}>
      <div className="w-full max-w-[1024px] bg-[#ecebd9]">
        <TitleBar />
        <div className={"flex h-[22px] items-center gap-1 border-b-2 border-[#8f8e86] bg-[#ece9d8] pl-1 text-[11px] text-[#a5a396] " + tahoma}>
          <ExplorerLogo page />
          <span>http://<span className="text-black">acer-0cd67b2dbf</span>:351/PQMace/root.fve?width=1014&amp;height=724&amp;checkNotifications</span>
        </div>
        <main className="border-l-2 border-[#8f8e86] pr-[2px]">
          <div className="pl-[2px]">
            <nav className="mt-px ml-px flex h-[28px] items-center gap-[13px] border-b-2 border-black bg-[#000099] pb-px pl-2 text-[11px] text-white">
              {menu.map((m) => <a key={m} href="#menu" className="whitespace-nowrap">{m}</a>)}
            </nav>
            <TopToolbar />
            <HomeRow />
          </div>
          <div className="h-[7px] border-b-2 border-[#1a1a1a] bg-[#c4c3b8]" />
          <div className="flex border-b-5 border-[#000099]">
            <section className="flex min-w-0 grow flex-col border-l-2 border-[#55554f] pb-[2px]">
              <ListToolbar />
              <FilterRow />
              <div className="flex">
                <div className="grow"><PartTable /></div>
                <ScrollBar />
              </div>
            </section>
            <div className="w-[6px] shrink-0 bg-[#000099]" />
            <section className="flex w-[375px] shrink-0 flex-col border-l border-[#9a998f]">
              <ViewToolbar />
              <div className="mr-[2px] grow border-2 border-black bg-white">
                <Diagram />
              </div>
            </section>
          </div>
          <div className="mt-px ml-px"><ActionBar /></div>
          <div className="h-[5px] border-y border-[#77776f] bg-[#f2f1e6]" />
          <div className="mt-[2px] h-[10px] bg-[#000099]" />
          <div className="h-px bg-white" />
        </main>
        <StatusBar />
      </div>
      <div className="mt-1 h-[34px] w-px bg-[#1d4d4d]" />
    </div>
  );
}
